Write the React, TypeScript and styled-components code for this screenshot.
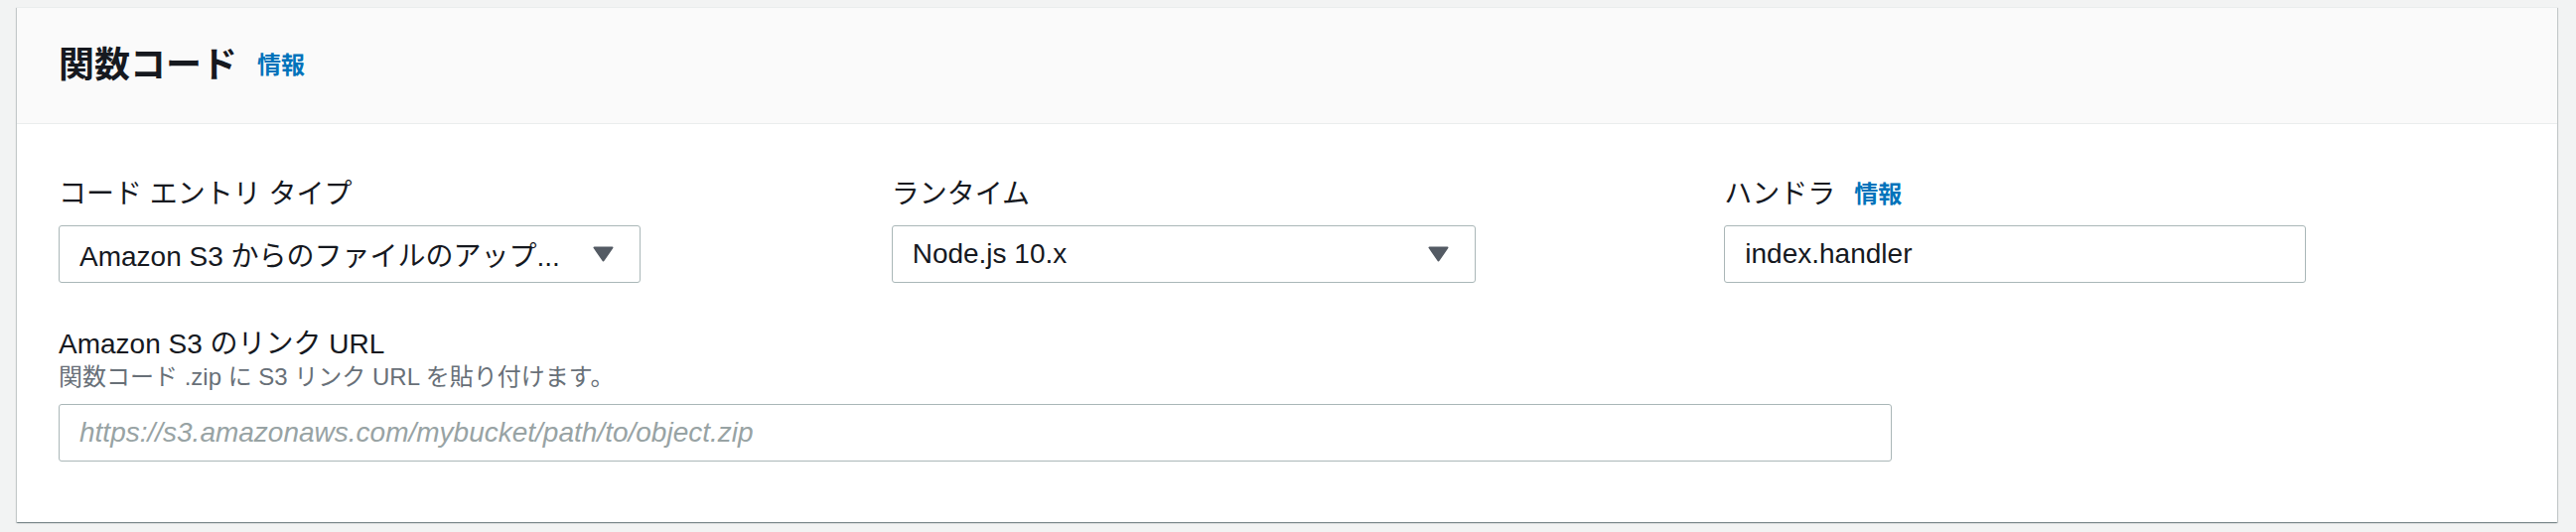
import React from "react";
import styled, { createGlobalStyle } from "styled-components";

const GlobalStyle = createGlobalStyle`
  html, body {
    margin: 0;
    padding: 0;
    background: #f2f3f3;
  }
  body {
    font-family: "Liberation Sans", "Noto Sans CJK JP", sans-serif;
    color: #16191f;
  }
  * { box-sizing: border-box; }
`;

const Page = styled.div`
  padding: 7px 19px 9px 17px;
`;

const Panel = styled.section`
  background: #ffffff;
  box-shadow: 0 1px 1px 0 rgba(0, 28, 36, 0.3), 1px 1px 1px 0 rgba(0, 28, 36, 0.15),
    -1px 1px 1px 0 rgba(0, 28, 36, 0.15);
  border-top: 1px solid #eaeded;
`;

const Header = styled.header`
  height: 117px;
  background: #fafafa;
  border-bottom: 1px solid #eaeded;
  display: flex;
  align-items: center;
  padding: 0 42px;
  gap: 20px;
`;

const Title = styled.h2`
  margin: 0;
  font-size: 36px;
  line-height: 44px;
  font-weight: 700;
  color: #16191f;
`;

const InfoLink = styled.a`
  font-size: 24px;
  line-height: 30px;
  font-weight: 700;
  color: #0073bb;
  text-decoration: none;
  cursor: pointer;
`;

const Body = styled.div`
  padding: 53px 42px 61px 42px;
  display: flex;
  flex-direction: column;
  gap: 44px;
`;

const Grid = styled.div`
  display: grid;
  grid-template-columns: repeat(3, 1fr);
  column-gap: 42px;
`;

const Field = styled.div`
  display: flex;
  flex-direction: column;
`;

const LabelRow = styled.div`
  display: flex;
  align-items: center;
  gap: 19px;
  height: 36px;
`;

const Label = styled.label`
  font-size: 28px;
  line-height: 36px;
  color: #16191f;
  white-space: pre;
`;

const Description = styled.div`
  font-size: 24px;
  line-height: 30px;
  color: #687078;
`;

const Control = styled.div<{ $width: number; $gap?: number }>`
  width: ${(p) => p.$width}px;
  height: 58px;
  margin-top: ${(p) => p.$gap ?? 13}px;
  border: 1px solid #aab7b8;
  border-radius: 3px;
  background: #ffffff;
  display: flex;
  align-items: center;
  padding: 0 26px 0 20px;
  font-size: 28px;
  color: #16191f;
  white-space: nowrap;
`;

const ValueText = styled.span`
  flex: 1;
  overflow: hidden;
`;

const Placeholder = styled.span`
  flex: 1;
  font-style: italic;
  color: #98a3a4;
`;

const Caret = () => (
  <svg width="21" height="16" viewBox="0 0 21 16" aria-hidden="true">
    <path d="M1.5 1.5 L19.5 1.5 L10.5 14.5 Z" fill="#545b64" stroke="#545b64" strokeWidth="2" strokeLinejoin="round" />
  </svg>
);

export default function App() {
  return (
    <>
      <GlobalStyle />
      <Page>
        <Panel>
          <Header>
            <Title>関数コード</Title>
            <InfoLink>情報</InfoLink>
          </Header>
          <Body>
            <Grid>
              <Field>
                <LabelRow>
                  <Label>コード エントリ タイプ</Label>
                </LabelRow>
                <Control $width={586}>
                  <ValueText>Amazon S3 からのファイルのアップ...</ValueText>
                  <Caret />
                </Control>
              </Field>
              <Field>
                <LabelRow>
                  <Label>ランタイム</Label>
                </LabelRow>
                <Control $width={588}>
                  <ValueText>Node.js 10.x</ValueText>
                  <Caret />
                </Control>
              </Field>
              <Field>
                <LabelRow>
                  <Label>ハンドラ</Label>
                  <InfoLink>情報</InfoLink>
                </LabelRow>
                <Control $width={586}>
                  <ValueText>index.handler</ValueText>
                </Control>
              </Field>
            </Grid>
            <Field>
              <LabelRow>
                <Label>Amazon S3 のリンク URL</Label>
              </LabelRow>
              <Description>関数コード .zip に S3 リンク URL を貼り付けます。</Description>
              <Control $width={1846} $gap={12}>
                <Placeholder>https://s3.amazonaws.com/mybucket/path/to/object.zip</Placeholder>
              </Control>
            </Field>
          </Body>
        </Panel>
      </Page>
    </>
  );
}
